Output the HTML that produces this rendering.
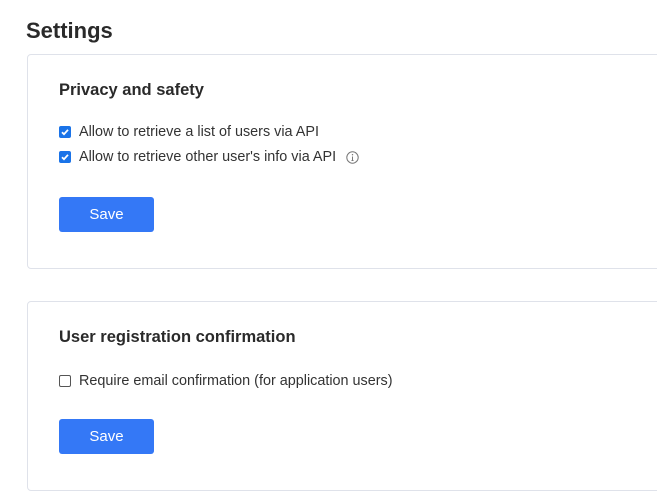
<!DOCTYPE html>
<html><head><style>
body{margin:0;width:657px;height:501px;overflow:hidden;background:#fff;font-family:"Liberation Sans",sans-serif;color:#222;position:relative}
h1{position:absolute;left:26px;top:18px;margin:0;font-size:22px;font-weight:bold;color:#2a2a2a}
.card{position:absolute;left:27px;width:660px;border:1px solid #dfe2ea;border-radius:4px;box-sizing:border-box}
h2{position:absolute;left:31px;margin:0;font-size:16.5px;font-weight:bold;color:#2a2a2a}
.row{position:absolute;left:31px;font-size:14.4px;color:#333;display:flex;align-items:center;white-space:nowrap}
.cb{width:12px;height:12px;border-radius:2px;margin-right:8px;box-sizing:border-box;display:inline-block}
.on{background:#1a73e8}
.off{border:1px solid #555}
.btn{position:absolute;left:31px;width:95px;height:35px;background:#3478f6;border-radius:3px;color:#fff;font-size:15px;text-align:center;line-height:35px}
</style></head><body>
<h1>Settings</h1>
<div class="card" style="top:54px;height:215px">
<h2 style="top:26px">Privacy and safety</h2>
<div class="row" style="top:69px"><span class="cb on"><svg width="12" height="12"><path d="M3 6.2l2 2 4-4.4" stroke="#fff" stroke-width="1.8" fill="none"/></svg></span>Allow to retrieve a list of users via API</div>
<div class="row" style="top:94px"><span class="cb on"><svg width="12" height="12"><path d="M3 6.2l2 2 4-4.4" stroke="#fff" stroke-width="1.8" fill="none"/></svg></span>Allow to retrieve other user's info via API<svg style="margin-left:10px" width="13" height="13"><circle cx="6.5" cy="6.5" r="5.7" stroke="#777" fill="none"/><path d="M6.5 5.5v4M5.5 9.5h2" stroke="#777"/><circle cx="6.5" cy="3.7" r=".7" fill="#777"/></svg></div>
<div class="btn" style="top:142px">Save</div>
</div>
<div class="card" style="top:301px;height:190px">
<h2 style="top:26px">User registration confirmation</h2>
<div class="row" style="top:71px"><span class="cb off"></span>Require email confirmation (for application users)</div>
<div class="btn" style="top:117px">Save</div>
</div>
</body></html>
